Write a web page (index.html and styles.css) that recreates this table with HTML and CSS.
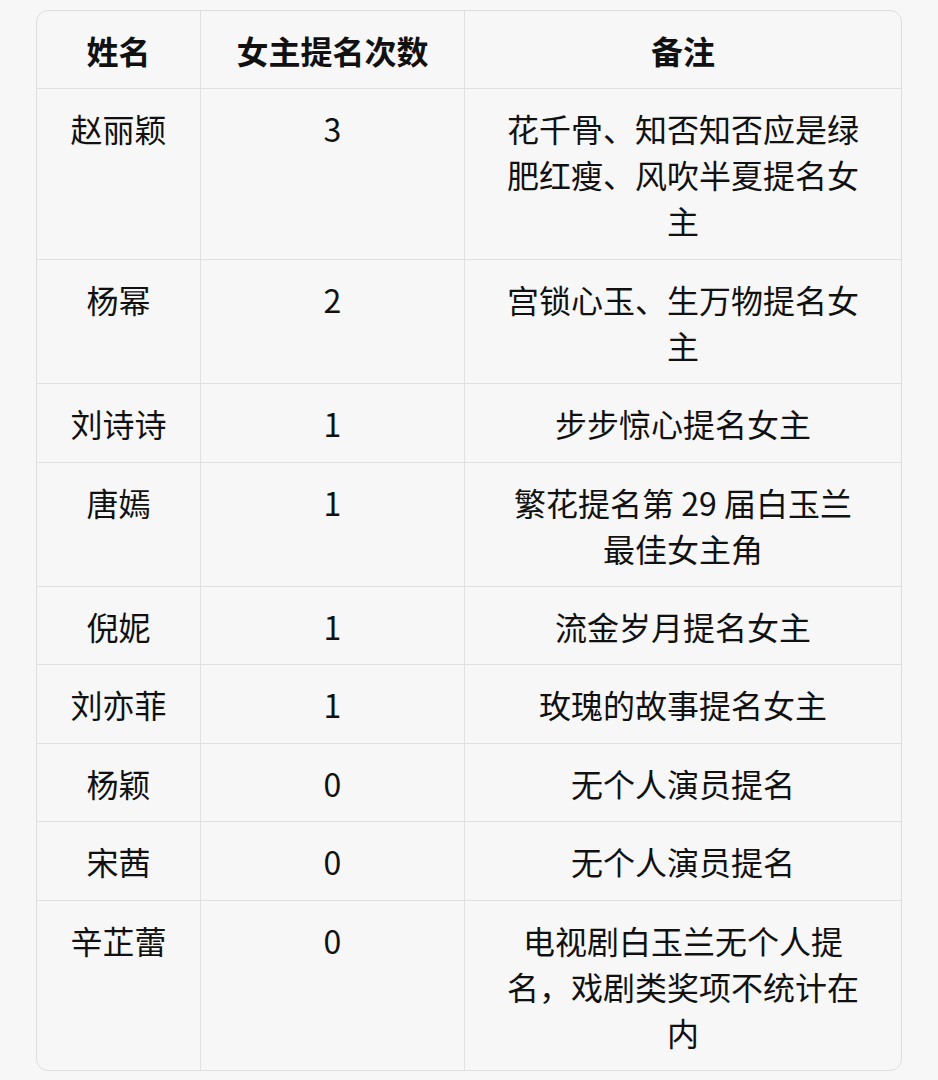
FILE: index.html
```html
<!DOCTYPE html>
<html lang="zh">
<head>
<meta charset="utf-8">
<link rel="stylesheet" href="styles.css">
</head>
<body>
<div class="wrap">
<table class="tbl">
<colgroup><col class="c1"><col class="c2"><col class="c3"></colgroup>
<thead>
<tr><th>姓名</th><th>女主提名次数</th><th class="note">备注</th></tr>
</thead>
<tbody>
<tr><td>赵丽颖</td><td>3</td><td class="note">花千骨、知否知否应是绿肥红瘦、风吹半夏提名女主</td></tr>
<tr><td>杨幂</td><td>2</td><td class="note">宫锁心玉、生万物提名女主</td></tr>
<tr><td>刘诗诗</td><td>1</td><td class="note">步步惊心提名女主</td></tr>
<tr><td>唐嫣</td><td>1</td><td class="note">繁花提名第 29 届白玉兰最佳女主角</td></tr>
<tr><td>倪妮</td><td>1</td><td class="note">流金岁月提名女主</td></tr>
<tr><td>刘亦菲</td><td>1</td><td class="note">玫瑰的故事提名女主</td></tr>
<tr><td>杨颖</td><td>0</td><td class="note">无个人演员提名</td></tr>
<tr><td>宋茜</td><td>0</td><td class="note">无个人演员提名</td></tr>
<tr><td>辛芷蕾</td><td>0</td><td class="note">电视剧白玉兰无个人提名，戏剧类奖项不统计在内</td></tr>
</tbody>
</table>
</div>
</body>
</html>
```
FILE: styles.css
```css
html, body {
  margin: 0;
  background: #f7f7f7;
}
body {
  padding: 10px 36px;
  font-family: "Noto Sans CJK SC", "Noto Sans", sans-serif;
  color: #111;
}
.wrap {
  border: 1px solid #dedede;
  border-radius: 12px;
  overflow: hidden;
  background: #f7f7f7;
}
.tbl {
  width: 100%;
  border-collapse: separate;
  border-spacing: 0;
  table-layout: fixed;
  font-size: 32px;
  line-height: 46px;
}
.c1 { width: 164px; }
.c2 { width: 264px; }
.tbl th, .tbl td {
  padding: 16px 12px 15.4px;
  text-align: center;
  vertical-align: top;
  border-right: 1px solid #e0e0e0;
  border-bottom: 1px solid #e0e0e0;
}
.tbl .note { padding-left: 34px; padding-right: 34px; }
.tbl th { font-weight: 700; }
.tbl tr > :last-child { border-right: none; }
.tbl tbody tr:last-child td { border-bottom: none; }
```
